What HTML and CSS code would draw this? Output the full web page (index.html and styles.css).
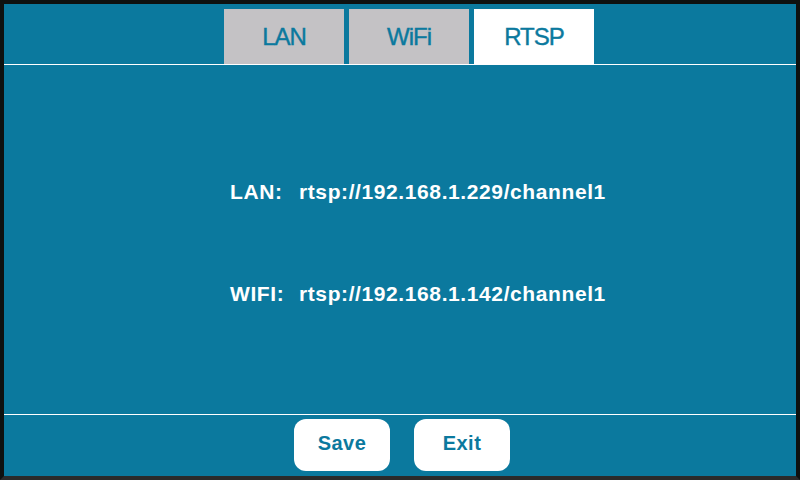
FILE: index.html
```html
<!DOCTYPE html>
<html lang="en">
<head>
  <meta charset="UTF-8" />
  <meta name="viewport" content="width=device-width, initial-scale=1" />
  <title>RTSP Settings</title>
  <link rel="stylesheet" href="styles.css">
</head>
<body>
  <div class="screen">
    <!-- Tabs -->
    <div class="tabs">
      <button class="tab">LAN</button>
      <button class="tab">WiFi</button>
      <button class="tab active">RTSP</button>
    </div>

    <div class="content">
      <div class="row">
        <span class="label">LAN:</span>
        <span class="url">rtsp://192.168.1.229/channel1</span>
      </div>
      <div class="row">
        <span class="label">WIFI:</span>
        <span class="url">rtsp://192.168.1.142/channel1</span>
      </div>
    </div>

    <div class="actions">
      <button class="btn">Save</button>
      <button class="btn">Exit</button>
    </div>
  </div>
</body>
</html>
```

FILE: styles.css
```css
body {
  margin: 0;
  background: #111;
  font-family: "Liberation Sans", Arial, sans-serif;
}

.screen {
  width: 800px;
  height: 480px;
  box-sizing: border-box;
  border: 4px solid #0e1110;
  border-bottom-color: #2a2b2b;
  background: #0b799e;
  display: flex;
  flex-direction: column;
}

.tabs {
  display: flex;
  gap: 5px;
  padding: 5px 0 0 220px;
  border-bottom: 1px solid #fff;
}

button {
  border: none;
  margin: 0;
  padding: 0;
  font-family: inherit;
  cursor: pointer;
}

.tab {
  width: 120px;
  height: 55px;
  line-height: 55px;
  background: #c4c2c5;
  color: #0b799e;
  font-size: 24px;
  letter-spacing: -1px;
  -webkit-text-stroke: 0.4px #0b799e;
}

.tab.active {
  background: #fff;
}

.content {
  height: 350px;
  box-sizing: border-box;
  padding: 115px 0 0 226px;
  border-bottom: 1px solid #fff;
  display: flex;
  flex-direction: column;
  gap: 78px;
  color: #fff;
  font-size: 21px;
  font-weight: bold;
  letter-spacing: 0.6px;
}

.row {
  display: flex;
  line-height: 24px;
}

.label {
  width: 69px;
}

.actions {
  display: flex;
  gap: 24px;
  padding: 4px 0 0 290px;
}

.btn {
  width: 96px;
  height: 52px;
  line-height: 48px;
  padding-bottom: 4px;
  border-radius: 12px;
  background: #fff;
  color: #0b799e;
  font-size: 20px;
  font-weight: bold;
  letter-spacing: 0.5px;
}
```
